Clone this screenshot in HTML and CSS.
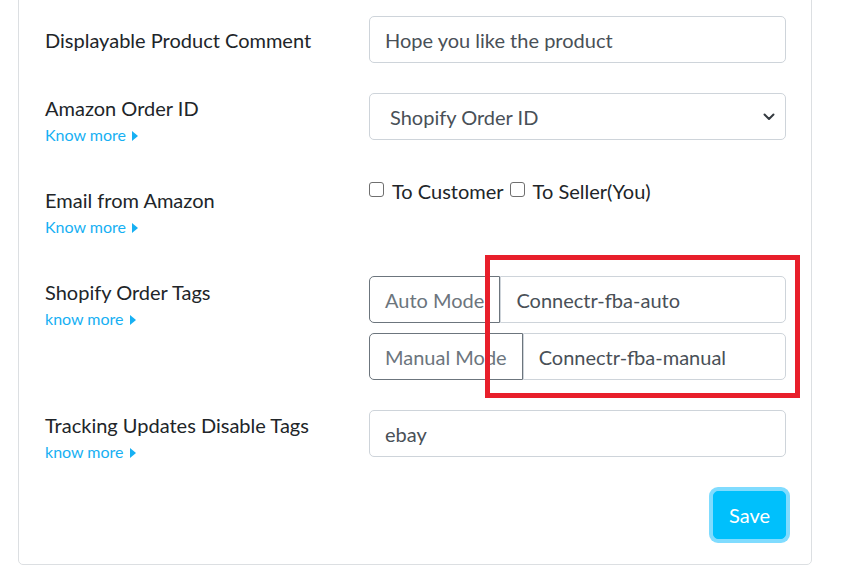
FILE: index.html
```html
<!DOCTYPE html>
<html lang="en">
<head>
<meta charset="utf-8">
<title>Settings</title>
<link rel="stylesheet" href="styles.css">
</head>
<body>
<div class="page">
  <div class="card">
    <form class="card-body">
      <div class="form-row">
        <div class="label-col"><label class="form-label">Displayable Product Comment</label></div>
        <div class="control-col">
          <input class="form-input" type="text" value="Hope you like the product">
        </div>
      </div>

      <div class="form-row">
        <div class="label-col">
          <label class="form-label">Amazon Order ID
            <a class="know-more" href="#">Know more<span class="caret"></span></a>
          </label>
        </div>
        <div class="control-col offset">
          <div class="select-wrap">
            <select class="form-select">
              <option>Shopify Order ID</option>
            </select>
            <svg class="chevron" width="12" height="8" viewBox="0 0 12 8"><path d="M1.5 1.5 L6 6 L10.5 1.5" fill="none" stroke="#343a40" stroke-width="2" stroke-linecap="round" stroke-linejoin="round"/></svg>
          </div>
        </div>
      </div>

      <div class="form-row">
        <div class="label-col">
          <label class="form-label">Email from Amazon
            <a class="know-more" href="#">Know more<span class="caret"></span></a>
          </label>
        </div>
        <div class="control-col">
          <div class="checks">
            <label class="check"><input type="checkbox" class="checkbox">To Customer</label>
            <label class="check"><input type="checkbox" class="checkbox">To Seller(You)</label>
          </div>
        </div>
      </div>

      <div class="form-row tags-row">
        <div class="label-col">
          <label class="form-label">Shopify Order Tags
            <a class="know-more" href="#">know more<span class="caret"></span></a>
          </label>
        </div>
        <div class="control-col offset tight">
          <div class="input-group">
            <span class="addon">Auto Mode</span>
            <input class="form-input group-input" type="text" value="Connectr-fba-auto">
          </div>
          <div class="input-group">
            <span class="addon">Manual Mode</span>
            <input class="form-input group-input" type="text" value="Connectr-fba-manual">
          </div>
        </div>
      </div>

      <div class="form-row last">
        <div class="label-col">
          <label class="form-label">Tracking Updates Disable Tags
            <a class="know-more" href="#">know more<span class="caret"></span></a>
          </label>
        </div>
        <div class="control-col offset">
          <input class="form-input" type="text" value="ebay">
        </div>
      </div>

      <div class="actions">
        <button type="button" class="btn-save">Save</button>
      </div>
    </form>
    <div class="highlight"></div>
  </div>
</div>
</body>
</html>
```
FILE: styles.css
```css
* { box-sizing: border-box; }
html, body { margin: 0; padding: 0; background: #fff; }
body {
  font-family: "Lato", "Open Sans", sans-serif;
  font-size: 20px;
  color: #212529;
  overflow: hidden;
}
.page { padding: 0 33px 0 18px; }
.card {
  position: relative;
  width: 794px;
  margin-top: -10px;
  border: 1px solid #dcdfe2;
  border-radius: 5px;
  background: #fff;
}
.card-body { padding: 25px; margin: 0; }
.form-row {
  display: grid;
  grid-template-columns: 325px 417px;
  align-items: start;
  margin-bottom: 20px;
}
.form-row.tags-row { margin-bottom: 21px; }
.form-row.last { margin-bottom: 18px; }
.form-label {
  display: block;
  padding: 9px 0 9px 1px;
  line-height: 30px;
  font-size: 20px;
  color: #212529;
}
.know-more {
  display: flex;
  align-items: center;
  gap: 6px;
  font-size: 16px;
  line-height: 24px;
  color: #17b0f3;
  text-decoration: none;
}
.caret {
  width: 0; height: 0;
  border-top: 5px solid transparent;
  border-bottom: 5px solid transparent;
  border-left: 6px solid #17b0f3;
  margin-top: 1px;
}
.control-col.offset { padding-top: 9px; }
.control-col.offset.tight { padding-top: 8px; }
.form-input {
  display: block;
  width: 100%;
  height: 47px;
  padding: 0 15px;
  font-family: inherit;
  font-size: 20px;
  color: #495057;
  background: #fff;
  border: 1px solid #ced4da;
  border-radius: 5px;
  outline: none;
}
.select-wrap { position: relative; }
.form-select {
  display: block;
  width: 100%;
  height: 47px;
  padding: 0 15px 0 20px;
  font-family: inherit;
  font-size: 20px;
  color: #495057;
  background: #fff;
  border: 1px solid #ced4da;
  border-radius: 5px;
  appearance: none;
  -webkit-appearance: none;
  outline: none;
}
.chevron {
  position: absolute;
  right: 11px;
  top: 20px;
  pointer-events: none;
}
.checks {
  display: flex;
  align-items: center;
  gap: 6px;
  line-height: 30px;
  font-size: 20px;
  color: #212529;
}
.check { display: flex; align-items: center; gap: 8px; }
.checkbox {
  appearance: none;
  -webkit-appearance: none;
  width: 15px; height: 15px;
  margin: 0;
  border: 1px solid #6f6f6f;
  border-radius: 3px;
  background: #fff;
  position: relative;
  top: -2px;
}
.input-group { display: flex; margin-bottom: 10px; }
.input-group:last-child { margin-bottom: 0; }
.addon {
  display: flex;
  align-items: center;
  height: 47px;
  padding: 0 15px;
  font-size: 20px;
  color: #6c757d;
  background: #fff;
  border: 1px solid #6c757d;
  border-radius: 5px 0 0 5px;
  white-space: nowrap;
}
.group-input {
  flex: 1;
  width: auto;
  min-width: 0;
  border-radius: 0 5px 5px 0;
}
.actions { display: flex; justify-content: flex-end; }
.btn-save {
  width: 73px;
  height: 48px;
  font-family: inherit;
  font-size: 20px;
  color: #fff;
  background: #00c0fc;
  border: 1px solid #00c0fc;
  border-radius: 5px;
  box-shadow: 0 0 0 4px #80dcff;
  padding: 0;
}
.highlight {
  position: absolute;
  left: 466px;
  top: 264px;
  width: 315px;
  height: 143px;
  border: 5px solid #e81f2b;
  pointer-events: none;
}
```
